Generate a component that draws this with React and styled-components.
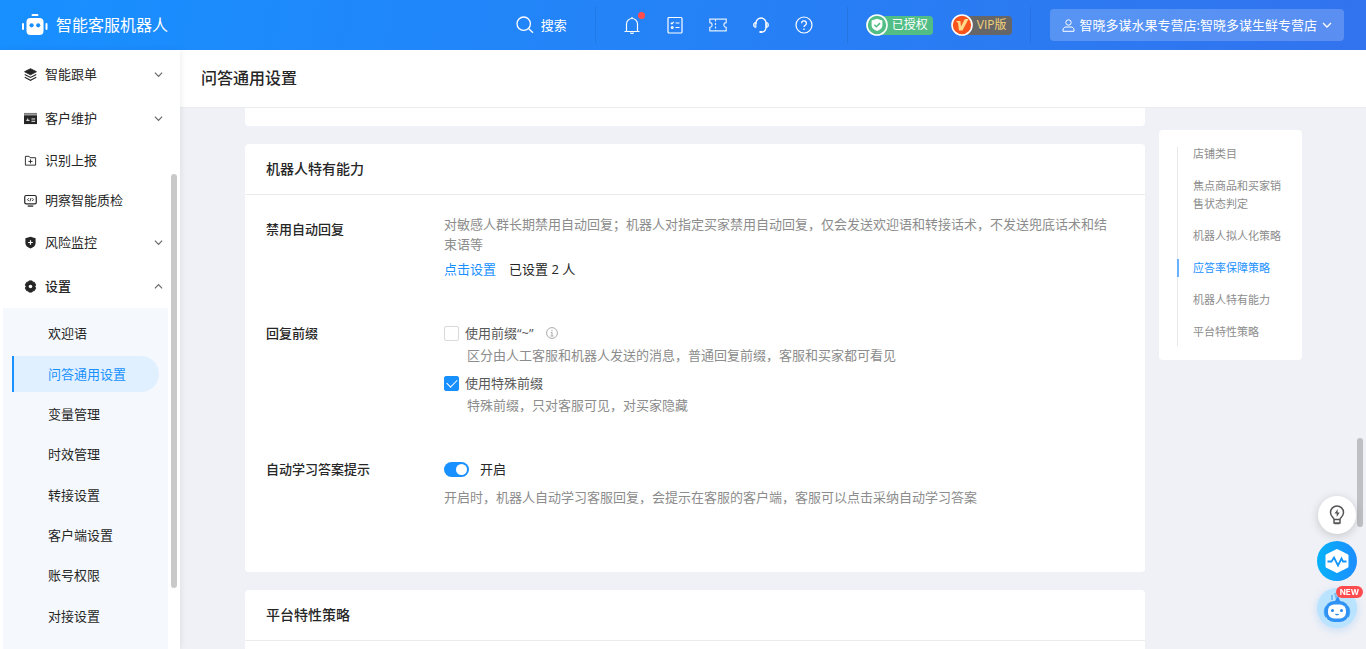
import React, { useState } from "react";
import styled, { createGlobalStyle, css } from "styled-components";

const COLORS = {
  primary: "#1890ff",
  text: "#262626",
  secondary: "#595959",
  muted: "#8c8c8c",
  border: "#ececee",
  page: "#f0f1f6",
};

const menu = [
  { name: "智能跟单", icon: "layers", group: true },
  { name: "客户维护", icon: "card", group: true },
  { name: "识别上报", icon: "folder" },
  { name: "明察智能质检", icon: "monitor" },
  { name: "风险监控", icon: "shield", group: true },
  { name: "设置", icon: "gear", group: true, open: true },
];

const settings = [
  "欢迎语",
  "问答通用设置",
  "变量管理",
  "时效管理",
  "转接设置",
  "客户端设置",
  "账号权限",
  "对接设置",
];

const anchors = [
  "店铺类目",
  "焦点商品和买家销售状态判定",
  "机器人拟人化策略",
  "应答率保障策略",
  "机器人特有能力",
  "平台特性策略",
];

const tools = [
  { name: "通知", icon: "bell", dot: true },
  { name: "任务", icon: "form" },
  { name: "卡券", icon: "ticket" },
  { name: "客服", icon: "headset" },
  { name: "帮助", icon: "help" },
];

const menuIcons = {
  layers: (
    <>
      <path d="M7 .8 13.4 4 7 7.3.6 4z" fill="currentColor" stroke="currentColor" />
      <path d="m.8 7 6.2 3.2L13.2 7M.8 10 7 13.2l6.2-3.2" strokeWidth="1.2" />
    </>
  ),
  card: (
    <>
      <path d="M0 1h14v2H0z" fill="currentColor" fillOpacity=".6" stroke="none" />
      <path d="M0 3.500h14V13H0z" fill="currentColor" stroke="none" />
      <path d="M2.500 9H6M4 7v2M8 7.500h4M8 10h4" stroke="#fff" />
    </>
  ),
  folder: (
    <>
      <path d="M1.500 2.500h4l1 1.500h6v8h-11z" />
      <path d="M7 5.800v4.400M4.800 8h4.400" />
    </>
  ),
  monitor: (
    <>
      <rect x=".8" y="1.6" width="12.4" height="9" rx="1.5" strokeWidth="1.3" />
      <path d="M4 13h6" strokeWidth="1.4" />
      <path d="M5.200 4.600 3.800 6.100l1.400 1.500M8.800 4.600l1.400 1.500-1.400 1.500M7.600 4.400 6.400 7.900" />
    </>
  ),
  shield: (
    <>
      <path
        d="M7 .8 12.5 2.500v5c0 3-2.500 4.800-5.500 6-3-1.200-5.500-3-5.500-6v-5z"
        fill="currentColor"
        stroke="none"
      />
      <path d="M7 4.500v5M4.500 7h5" stroke="#fff" strokeWidth="1.3" />
    </>
  ),
  gear: (
    <>
      <path
        d="M5.300 1h3.400l.6 1.500 1.600-.2 1.700 2.900L11.700 7l.9 1.800-1.700 2.900-1.600-.2L8.700 13H5.300l-.6-1.500-1.600.2-1.700-2.900L2.300 7l-.9-1.800 1.700-2.900 1.600.2z"
        fill="currentColor"
        stroke="currentColor"
        strokeLinejoin="round"
      />
      <circle cx="7" cy="7" r="1.9" fill="#fff" stroke="none" />
    </>
  ),
};

const toolIcons = {
  bell: (
    <>
      <path d="M1.500 15.500h15M3.500 15.500V8a5.500 5.500 0 0 1 11 0v7.500" />
      <path d="M7.500 16.500a1.600 1.600 0 0 0 3 0M9 1v1.500" />
    </>
  ),
  form: (
    <>
      <rect x="2" y="1.5" width="14" height="15.5" rx="1" />
      <path d="m4.800 6.800 1.100 1 1.800-2M9.500 7h4M9.500 11.500h4" />
      <circle cx="6.2" cy="11.5" r=".9" />
    </>
  ),
  ticket: (
    <g strokeOpacity=".85">
      <path d="M.8 3.200h16.400v3.500a2.300 2.300 0 0 0 0 4.600v3.500H.8v-3.500a2.300 2.300 0 0 0 0-4.600z" />
      <path d="M6.500 3.500v11" strokeDasharray="2 1.5" />
    </g>
  ),
  headset: (
    <>
      <path d="M4 8V7a5 5 0 0 1 10 0v4c0 3-1.500 4.800-4 5" strokeWidth="1.3" />
      <path
        d="M4 6.300v5.200a2.600 2.600 0 0 1 0-5.200zM14 6.300v5.200a2.600 2.600 0 0 0 0-5.200z"
        fill="currentColor"
        fillOpacity=".6"
        strokeWidth=".8"
      />
      <path d="M7.500 16h2.500" strokeWidth="2" />
    </>
  ),
  help: (
    <>
      <circle cx="9" cy="9" r="8" />
      <path d="M6.600 7.200a2.400 2.400 0 1 1 3.600 2.100c-.8.500-1.200.8-1.200 1.800M9 12.500V14" strokeWidth="1.3" />
    </>
  ),
};

const Chevron = ({ up, size = 9 }) => (
  <svg width={size} height={size} viewBox="0 0 10 10" fill="none" stroke="currentColor" strokeWidth="1.3">
    <path d={up ? "M1 7l4-4 4 4" : "M1 3l4 4 4-4"} />
  </svg>
);

const RobotLogo = () => (
  <svg width="26" height="22" viewBox="0 0 26 22" fill="#fff">
    <rect x="9.5" y="0" width="7" height="2" rx="1" />
    <rect x="4.500" y="4" width="17" height="17" rx="4" />
    <rect x="0" y="9" width="2" height="7" rx="1" />
    <rect x="23.500" y="9" width="2" height="7" rx="1" />
    <circle cx="9.600" cy="11.300" r="2.100" fill="#1890ff" />
    <circle cx="16.200" cy="11.300" r="2.100" fill="#1890ff" />
  </svg>
);

const TopBar = () => (
  <Header>
    <Brand href="#home">
      <RobotLogo />
      智能客服机器人
    </Brand>
    <SearchButton>
      <svg width="18" height="18" viewBox="0 0 18 18" fill="none" stroke="currentColor" strokeWidth="1.3">
        <circle cx="7.7" cy="7.7" r="6.7" />
        <path d="m12.500 12.500 4.500 4.300" />
      </svg>
      搜索
    </SearchButton>
    <Tools>
      {tools.map((tool) => (
        <ToolButton key={tool.name} aria-label={tool.name}>
          <svg width="18" height="18" viewBox="0 0 18 18" fill="none" stroke="currentColor" strokeWidth="1.2">
            {toolIcons[tool.icon]}
          </svg>
          {tool.dot && <Dot />}
        </ToolButton>
      ))}
    </Tools>
    <Badges>
      <Badge $bg="#52be86" $color="#ffffff">
        <svg width="22" height="22" viewBox="0 0 22 22">
          <circle cx="11" cy="11" r="10" fill="#52be86" stroke="#fff" strokeWidth="1.6" />
          <path d="m11 4.800 5.400 1.700v4.700c0 3-2.300 4.600-5.400 5.900-3.100-1.300-5.400-2.900-5.400-5.900V6.500z" fill="#fff" />
          <path d="m8.400 10.700 2 2 3.600-3.600" fill="none" stroke="#52be86" strokeWidth="1.5" />
        </svg>
        已授权
      </Badge>
      <Badge $bg="#666666" $color="#f5d27a">
        <svg width="22" height="22" viewBox="0 0 22 22">
          <circle cx="11" cy="11" r="10" fill="#fa541c" stroke="#fff" strokeWidth="1.6" />
          <path d="M5 7h4.400l.6 5.500L13.800 5h3.700L11.500 16.500H8L7 9z" fill="#ffd98a" />
        </svg>
        VIP版
      </Badge>
    </Badges>
    <ShopButton>
      <svg width="13" height="13" viewBox="0 0 13 13" fill="none" stroke="currentColor">
        <circle cx="6.5" cy="3.5" r="2.7" />
        <path d="M1 12.300V11c0-2 1.500-3 3-3h5c1.500 0 3 1 3 3v1.300z" />
      </svg>
      <span>智晓多谋水果专营店:智晓多谋生鲜专营店</span>
      <Chevron size={10} />
    </ShopButton>
  </Header>
);

const Sidebar = () => (
  <Side>
    {menu.map((item) => (
      <MenuItem key={item.name} $group={item.group} $open={item.open}>
        <svg width="13" height="13" viewBox="0 0 14 14" fill="none" stroke="currentColor">
          {menuIcons[item.icon]}
        </svg>
        <span>{item.name}</span>
        {item.group && (
          <Arrow>
            <Chevron up={item.open} />
          </Arrow>
        )}
      </MenuItem>
    ))}
    <SubMenu>
      {settings.map((name) => (
        <li key={name}>
          <SubLink href="#settings" $active={name === "问答通用设置"}>
            {name}
          </SubLink>
        </li>
      ))}
    </SubMenu>
    <SideThumb />
  </Side>
);

const FloatingTools = () => (
  <Floating>
    <RoundButton aria-label="建议" $kind="plain">
      <svg width="16" height="20" viewBox="0 0 16 20" fill="none" stroke="#555" strokeWidth="1.5">
        <path d="M5 14.500c0-2-3.500-3-3.500-7a6.500 6.500 0 0 1 13 0c0 4-3.500 5-3.500 7zM5 14.500v3.500h6v-3.500M5.500 18.500h5" />
        <path d="M8.800 4 5.500 8.600h2.200V12l3-4.500H8.500z" fill="#555" stroke="none" />
      </svg>
    </RoundButton>
    <RoundButton aria-label="监测" $kind="pulse">
      <svg width="26" height="28" viewBox="0 0 26 28" fill="none">
        <path
          d="m13 3.500 10 5v11l-10 5-10-5v-11z"
          fill="#fff"
          stroke="#fff"
          strokeWidth="3"
          strokeLinejoin="round"
        />
        <path d="M3.500 14.500h4l2.500-4 4 8 3.500-7 1.500 3h3.500" stroke="#1296fb" strokeWidth="1.8" />
      </svg>
    </RoundButton>
    <RoundButton aria-label="智能助手" $kind="robot">
      <svg width="30" height="34" viewBox="0 0 30 34">
        <path d="M10 4v5M13 2l2 7" stroke="#77bdf5" strokeWidth="2" />
        <path d="m13 10 3-5 2 5z" fill="#2e8cf0" />
        <path d="M4 15C1 17 1 24 4 27zM26 15c3 2 3 9 0 12z" fill="#45a6f8" />
        <rect x="3" y="10" width="24" height="21" rx="9" fill="#3093f4" />
        <rect x="6" y="13.500" width="18" height="14" rx="6" fill="#fff" />
        <circle cx="10.5" cy="19.500" r="1.5" fill="#2688ef" />
        <circle cx="19.5" cy="19.500" r="1.5" fill="#2688ef" />
        <path d="M13.500 23q1.500 1.500 3 0" fill="none" stroke="#2688ef" strokeWidth="1.2" />
      </svg>
      <NewTag>NEW</NewTag>
    </RoundButton>
  </Floating>
);

export default function App() {
  const [plainPrefix, setPlainPrefix] = useState(false);
  const [specialPrefix, setSpecialPrefix] = useState(true);
  const [learning, setLearning] = useState(true);

  return (
    <>
      <GlobalStyle />
      <Page>
        <TopBar />
        <Body>
          <Sidebar />
          <Main>
            <TitleBar>
              <h1>问答通用设置</h1>
            </TitleBar>
            <Content>
              <Cards>
                <CardEnd />
                <Card>
                  <CardTitle>机器人特有能力</CardTitle>
                  <CardBody>
                    <Row>
                      <RowLabel>禁用自动回复</RowLabel>
                      <div>
                        <Description>
                          对敏感人群长期禁用自动回复；机器人对指定买家禁用自动回复，仅会发送欢迎语和转接话术，不发送兜底话术和结束语等
                        </Description>
                        <LinkLine>
                          <a href="#blocked">点击设置</a>
                          <span>已设置 2 人</span>
                        </LinkLine>
                      </div>
                    </Row>
                    <Row>
                      <RowLabel>回复前缀</RowLabel>
                      <Options>
                        <div>
                          <OptionLine>
                            <label>
                              <Checkbox
                                type="checkbox"
                                checked={plainPrefix}
                                onChange={(e) => setPlainPrefix(e.target.checked)}
                              />
                              使用前缀“~”
                            </label>
                            <svg width="12" height="12" viewBox="0 0 12 12" fill="none" stroke="#aaa">
                              <circle cx="6" cy="6" r="5.4" />
                              <path d="M6 2.800v1.200M6 5v4M4.800 5.300H6M4.500 9h3" />
                            </svg>
                          </OptionLine>
                          <OptionHint>
                            区分由人工客服和机器人发送的消息，普通回复前缀，客服和买家都可看见
                          </OptionHint>
                        </div>
                        <div>
                          <OptionLine>
                            <label>
                              <Checkbox
                                type="checkbox"
                                checked={specialPrefix}
                                onChange={(e) => setSpecialPrefix(e.target.checked)}
                              />
                              使用特殊前缀
                            </label>
                          </OptionLine>
                          <OptionHint>特殊前缀，只对客服可见，对买家隐藏</OptionHint>
                        </div>
                      </Options>
                    </Row>
                    <Row>
                      <RowLabel>自动学习答案提示</RowLabel>
                      <Options>
                        <SwitchLabel>
                          <Switch
                            type="checkbox"
                            role="switch"
                            checked={learning}
                            onChange={(e) => setLearning(e.target.checked)}
                          />
                          开启
                        </SwitchLabel>
                        <Description>
                          开启时，机器人自动学习客服回复，会提示在客服的客户端，客服可以点击采纳自动学习答案
                        </Description>
                      </Options>
                    </Row>
                  </CardBody>
                </Card>
                <Card>
                  <CardTitle>平台特性策略</CardTitle>
                  <CardBody />
                </Card>
              </Cards>
              <Anchors>
                <ul>
                  {anchors.map((name) => (
                    <li key={name}>
                      <AnchorLink href="#section" $active={name === "应答率保障策略"}>
                        {name}
                      </AnchorLink>
                    </li>
                  ))}
                </ul>
              </Anchors>
            </Content>
            <MainThumb />
          </Main>
        </Body>
        <FloatingTools />
      </Page>
    </>
  );
}

const GlobalStyle = createGlobalStyle`
  * {
    box-sizing: border-box;
  }
  body {
    margin: 0;
    color: ${COLORS.text};
    font: 13px/20px "Open Sans", "Noto Sans CJK SC", sans-serif;
  }
  button {
    border: 0;
    padding: 0;
    background: none;
    color: inherit;
    font: inherit;
    cursor: pointer;
  }
  a {
    color: ${COLORS.primary};
    text-decoration: none;
  }
  h1, h2, h3, p, ul {
    margin: 0;
    padding: 0;
    font-weight: 400;
    list-style: none;
  }
  svg {
    display: block;
    flex: none;
  }
`;

const Page = styled.div`
  display: flex;
  flex-direction: column;
  height: 100vh;
  overflow: hidden;
  background: ${COLORS.page};
`;

const Header = styled.header`
  display: flex;
  flex: none;
  align-items: center;
  height: 50px;
  padding: 0 22px;
  color: #fff;
  background: linear-gradient(100deg, #1890ff, #3273ee);
`;

const Brand = styled.a`
  display: flex;
  align-items: center;
  gap: 8px;
  margin-right: auto;
  color: #fff;
  font-size: 16px;
`;

const SearchButton = styled.button`
  display: flex;
  align-items: center;
  gap: 7px;
  margin-right: 28px;
`;

const Tools = styled.div`
  display: flex;
  align-items: center;
  gap: 25px;
  height: 36px;
  padding: 0 34px 0 27px;
  border: solid rgba(0, 0, 0, 0.08);
  border-width: 0 1px;
`;

const ToolButton = styled.button`
  position: relative;
`;

const Dot = styled.i`
  position: absolute;
  top: -4px;
  right: -4px;
  width: 7px;
  height: 7px;
  border-radius: 50%;
  background: #ff4d4f;
`;

const Badges = styled.div`
  display: flex;
  align-items: center;
  gap: 18px;
  height: 36px;
  margin-right: 19px;
  padding: 0 18px;
  border-right: 1px solid rgba(0, 0, 0, 0.08);
`;

const Badge = styled.span`
  display: flex;
  align-items: center;
  gap: 4px;
  height: 19px;
  padding-right: 5px;
  border-radius: 10px 4px 4px 10px;
  background: ${(props) => props.$bg};
  color: ${(props) => props.$color};
  font-size: 12px;
`;

const ShopButton = styled.button`
  display: flex;
  align-items: center;
  gap: 5px;
  height: 32px;
  padding: 0 12px;
  border-radius: 4px;
  background: rgba(255, 255, 255, 0.2);
`;

const Body = styled.div`
  display: flex;
  flex: 1;
  min-height: 0;
`;

const Side = styled.nav`
  position: relative;
  z-index: 1;
  display: flex;
  flex: none;
  flex-direction: column;
  width: 180px;
  padding-top: 2px;
  background: #fff;
  box-shadow: 1px 0 6px rgba(0, 21, 41, 0.08);
`;

const MenuItem = styled.button`
  display: flex;
  flex: none;
  align-items: center;
  gap: 8px;
  height: ${(props) => (props.$group ? 44 : 40)}px;
  padding: 0 17px 0 24px;
  text-align: left;
  font-weight: ${(props) => (props.$open ? 500 : 400)};

  span {
    flex: 1;
  }
`;

const Arrow = styled.i`
  color: #666;
`;

const SubMenu = styled.ul`
  display: grid;
  flex: 1;
  grid-auto-rows: 1fr;
  align-items: center;
  margin: 0 12px 0 3px;
  padding: 5px 9px 13px;
  background: #f5f9fd;
`;

const SubLink = styled.a`
  display: block;
  padding: 8px 0 8px 34px;
  border-left: 2px solid transparent;
  border-radius: 0 18px 18px 0;
  color: ${COLORS.text};

  ${(props) =>
    props.$active &&
    css`
      border-color: ${COLORS.primary};
      background: #e1f0ff;
      color: ${COLORS.primary};
    `}
`;

const Thumb = styled.div`
  position: absolute;
  width: 6px;
  border-radius: 3px;
`;

const SideThumb = styled(Thumb)`
  top: 124px;
  right: 3px;
  height: 414px;
  background: #c9c9c9;
`;

const Main = styled.main`
  position: relative;
  display: flex;
  flex: 1;
  flex-direction: column;
  min-width: 0;
`;

const MainThumb = styled(Thumb)`
  top: 388px;
  right: 3px;
  height: 89px;
  background: #bfc0c4;
`;

const TitleBar = styled.div`
  flex: none;
  padding: 16px 21px;
  border-bottom: 1px solid ${COLORS.border};
  background: #fff;

  h1 {
    font-size: 16px;
    font-weight: 500;
    line-height: 25px;
  }
`;

const Content = styled.div`
  display: flex;
  flex: 1;
  align-items: flex-start;
  gap: 14px;
  min-height: 0;
  padding: 0 64px 0 65px;
  overflow: hidden;
`;

const Cards = styled.div`
  display: flex;
  flex: 1;
  flex-direction: column;
  gap: 18px;
`;

const Card = styled.section`
  border-radius: 4px;
  background: #fff;
`;

/* tail of the section above the visible ones */
const CardEnd = styled(Card)`
  height: 18px;
  border-radius: 0 0 4px 4px;
`;

const CardTitle = styled.h2`
  padding: 15px 21px;
  border-bottom: 1px solid ${COLORS.border};
  font-size: 14px;
  font-weight: 500;
`;

const CardBody = styled.div`
  padding: 19px 21px 26px;
`;

const Row = styled.div`
  display: grid;
  grid-template-columns: 178px 1fr;
  padding-bottom: 39px;
`;

const RowLabel = styled.h3`
  padding-top: 5px;
  font-size: 13px;
  font-weight: 500;
`;

const Description = styled.p`
  max-width: 670px;
  color: ${COLORS.muted};
`;

const LinkLine = styled.p`
  display: flex;
  gap: 13px;
  padding-top: 5px;
`;

const Options = styled.div`
  display: flex;
  flex-direction: column;
  gap: 8px;
  padding-top: 5px;
`;

const OptionLine = styled.div`
  display: flex;
  align-items: center;
  gap: 12px;
  color: ${COLORS.secondary};

  label {
    display: flex;
    align-items: center;
    gap: 6px;
  }
`;

const OptionHint = styled.p`
  padding: 2px 0 0 23px;
  color: ${COLORS.muted};
`;

const Checkbox = styled.input`
  appearance: none;
  display: grid;
  place-items: center;
  width: 15px;
  height: 15px;
  margin: 0;
  border: 1px solid #d9d9d9;
  border-radius: 2px;
  background: #fff;

  &:checked {
    border-color: ${COLORS.primary};
    background: ${COLORS.primary};
  }

  &:checked::before {
    content: "";
    width: 9px;
    height: 5px;
    margin-bottom: 3px;
    border: solid #fff;
    border-width: 0 0 1px 1px;
    transform: rotate(-45deg);
  }
`;

const SwitchLabel = styled.label`
  display: flex;
  align-items: center;
  gap: 11px;
`;

const Switch = styled.input`
  appearance: none;
  display: flex;
  width: 25px;
  height: 15px;
  margin: 0;
  padding: 2px;
  border-radius: 8px;
  background: #bfbfbf;

  &:checked {
    justify-content: flex-end;
    background: ${COLORS.primary};
  }

  &::before {
    content: "";
    width: 11px;
    height: 11px;
    border-radius: 50%;
    background: #fff;
  }
`;

const Anchors = styled.aside`
  flex: none;
  width: 143px;
  margin-top: 22px;
  padding: 15px 18px 19px;
  border-radius: 4px;
  background: #fff;

  ul {
    position: relative;
    display: flex;
    flex-direction: column;
    gap: 14px;
  }

  ul::before {
    content: "";
    position: absolute;
    inset: 2px auto -5px 0;
    width: 1px;
    background: #e8e8e8;
  }
`;

const AnchorLink = styled.a`
  position: relative;
  display: block;
  padding-left: 14px;
  border-left: 2px solid ${(props) => (props.$active ? "#69b1ff" : "transparent")};
  color: ${(props) => (props.$active ? COLORS.primary : COLORS.muted)};
  font-size: 11px;
  line-height: 18px;
`;

const Floating = styled.div`
  position: fixed;
  right: 9px;
  bottom: 21px;
  z-index: 2;
  display: flex;
  flex-direction: column;
  align-items: center;
  gap: 7px;
`;

const RoundButton = styled.button`
  position: relative;
  display: grid;
  place-items: center;
  width: 40px;
  height: 40px;
  border-radius: 50%;

  ${(props) =>
    props.$kind === "plain" &&
    css`
      width: 38px;
      height: 38px;
      background: #fff;
      box-shadow: 0 2px 10px rgba(0, 0, 0, 0.18);
    `}

  ${(props) =>
    props.$kind === "pulse" &&
    css`
      background: linear-gradient(90deg, #06b2f8, #1c8dff);
    `}

  ${(props) =>
    props.$kind === "robot" &&
    css`
      background: #b9e3ff;
      box-shadow: 0 2px 8px rgba(24, 144, 255, 0.2);
    `}
`;

const NewTag = styled.span`
  position: absolute;
  top: -2px;
  right: -6px;
  padding: 0 4px;
  border-radius: 6px;
  background: #ff4d4f;
  color: #fff;
  font: 700 8px/12px Inter, sans-serif;
`;
